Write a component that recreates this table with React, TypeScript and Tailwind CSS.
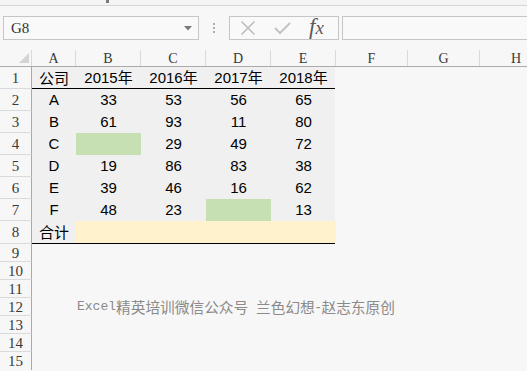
import React from "react";

const cols = [
  { k: "A", w: "w-[44px]" },
  { k: "B", w: "w-[65px]" },
  { k: "C", w: "w-[65px]" },
  { k: "D", w: "w-[65px]" },
  { k: "E", w: "w-[65px]" },
  { k: "F", w: "w-[72px]" },
  { k: "G", w: "w-[72px]" },
  { k: "H", w: "w-[72px]" },
];

type Cell = string | { fill: string };

const data: Cell[][] = [
  ["公司", "2015年", "2016年", "2017年", "2018年"],
  ["A", "33", "53", "56", "65"],
  ["B", "61", "93", "11", "80"],
  ["C", { fill: "green" }, "29", "49", "72"],
  ["D", "19", "86", "83", "38"],
  ["E", "39", "46", "16", "62"],
  ["F", "48", "23", { fill: "green" }, "13"],
  ["合计", { fill: "yellow" }, { fill: "yellow" }, { fill: "yellow" }, { fill: "yellow" }],
];

const dataW = ["w-[44px]", "w-[65px]", "w-[65px]", "w-[65px]", "w-[65px]"];

const mono = { fontFamily: '"Liberation Mono", "DejaVu Sans Mono", monospace' };
const serif = { fontFamily: '"Liberation Serif", "DejaVu Serif", serif' };
const sans = { fontFamily: '"Liberation Sans", "Noto Sans CJK SC", sans-serif' };
const cjk = { fontFamily: '"Noto Sans CJK SC", "Liberation Sans", sans-serif' };

function RowHead({ n, last }: { n: number; last?: boolean }) {
  return (
    <div
      className={`w-[32px] shrink-0 h-full flex items-center justify-center border-r border-[#a9a9a9] text-[15px] text-[#3a3a3a] pt-[1px] ${last ? "" : "border-b border-b-[#dadada]"}`}
      style={serif}
    >
      {n}
    </div>
  );
}

export default function App() {
  return (
    <div className="w-[527px] h-[371px] overflow-hidden bg-[#f7f7f7] flex flex-col">
      {/* top strip */}
      <div className="h-[6px] shrink-0 border-b border-[#d6d6d6] bg-[#f4f4f4] relative">
        <div className="absolute left-[106px] top-0 w-[3px] h-[3px] bg-[#7a7a7a]" />
      </div>
      {/* formula bar */}
      <div className="h-[44px] shrink-0 flex items-start pt-[10px]">
        <div className="ml-[3px] w-[196px] h-[24px] border border-[#c6c6c6] bg-[#f9f9f9] flex items-center pl-[7px] pr-[6px]">
          <span className="text-[15px] text-[#333] flex-1 pt-[1px]" style={serif}>
            G8
          </span>
          <svg width="8" height="5" viewBox="0 0 8 5">
            <path d="M0 0 L8 0 L4 4.5 Z" fill="#7a7a7a" />
          </svg>
        </div>
        <div className="w-[30px] h-[24px] flex flex-col items-center justify-center gap-[2px]">
          <div className="w-[2px] h-[2px] bg-[#ababab]" />
          <div className="w-[2px] h-[2px] bg-[#ababab]" />
          <div className="w-[2px] h-[2px] bg-[#ababab]" />
        </div>
        <div className="w-[110px] h-[24px] border border-[#c6c6c6] bg-[#f9f9f9] flex items-center">
          <svg width="16" height="16" viewBox="0 0 16 16" className="ml-[10px]">
            <path d="M1.5 1.5 L14.5 14.5 M14.5 1.5 L1.5 14.5" stroke="#bdbdbd" strokeWidth="1.6" />
          </svg>
          <svg width="17" height="14" viewBox="0 0 17 14" className="ml-[18px]">
            <path d="M1 7 L6 12 L16 2" stroke="#c4c4c4" strokeWidth="2" fill="none" />
          </svg>
          <span
            className="ml-[18px] text-[23px] leading-none italic text-[#5a5a5a] -mt-[3px]"
            style={serif}
          >
            f<span className="text-[19px]">x</span>
          </span>
        </div>
        <div className="ml-[3px] flex-1 h-[24px] border border-r-0 border-[#c6c6c6] bg-[#f9f9f9]" />
      </div>
      {/* column header */}
      <div className="h-[17px] shrink-0 flex border-b border-[#ababab]">
        <div className="w-[32px] shrink-0 h-full border-r border-[#dadada] relative">
          <svg width="10" height="10" viewBox="0 0 10 10" className="absolute right-[2px] bottom-[3px]">
            <path d="M10 0 L10 10 L0 10 Z" fill="#d4d4d4" />
          </svg>
        </div>
        {cols.map((c, i) => (
          <div
            key={c.k}
            className={`${c.w} shrink-0 h-full flex items-center justify-center text-[14px] text-[#3a3a3a] ${i < cols.length - 1 ? "border-r border-[#dadada]" : ""}`}
            style={serif}
          >
            {c.k}
          </div>
        ))}
        <div className="w-[2px] h-[13px] mt-[2px] border-l-2 border-t border-b border-[#333]" />
      </div>
      {/* data rows */}
      {data.map((row, ri) => {
        const black = ri === 0 || ri === 7;
        return (
          <div key={ri} className={`${ri === 7 ? "h-[23px]" : "h-[22px]"} shrink-0 flex`}>
            <RowHead n={ri + 1} />
            <div className={`flex w-[303px] shrink-0 h-full bg-[#f0f0f0] ${black ? "border-b border-black" : ""}`}>
              {row.map((cell, ci) => {
                if (typeof cell === "string") {
                  return (
                    <div
                      key={ci}
                      className={`${dataW[ci]} shrink-0 h-full flex items-center justify-center text-[15px] text-black pt-[1px]`}
                      style={/[0-9A-F]/.test(cell) ? sans : cjk}
                    >
                      {cell}
                    </div>
                  );
                }
                return (
                  <div
                    key={ci}
                    className={`${dataW[ci]} shrink-0 h-full ${cell.fill === "green" ? "bg-[#c6e0b4]" : "bg-[#fff2cc]"}`}
                  />
                );
              })}
            </div>
          </div>
        );
      })}
      {/* empty rows */}
      {[9, 10, 11, 12, 13, 14, 15].map((n) => (
        <div key={n} className="h-[18px] shrink-0 flex">
          <RowHead n={n} last={n === 15} />
          {n === 12 && (
            <div className="pl-[45px] flex items-center whitespace-nowrap text-[#8a8a8a]">
              <span className="text-[13px]" style={mono}>Excel</span>
              <span className="text-[14.7px] leading-none" style={cjk}>精英培训微信公众号</span>
              <span className="text-[13px]" style={mono}>&nbsp;</span>
              <span className="text-[14.7px] leading-none" style={cjk}>兰色幻想</span>
              <span className="text-[14px] px-[1px]" style={sans}>-</span>
              <span className="text-[14.7px] leading-none" style={cjk}>赵志东原创</span>
            </div>
          )}
        </div>
      ))}
    </div>
  );
}
